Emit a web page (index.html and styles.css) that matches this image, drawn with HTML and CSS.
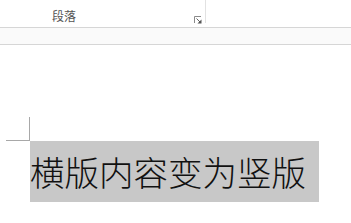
FILE: index.html
```html
<!DOCTYPE html>
<html lang="zh-CN">
<head>
  <meta charset="UTF-8">
  <meta name="viewport" content="width=device-width, initial-scale=1.0">
  <title>段落</title>
  <link rel="stylesheet" href="styles.css">
</head>
<body>
  <div class="ribbon">
    <div class="group">
      <span class="group-label">段落</span>
      <span class="launcher">
        <svg width="8" height="8" viewBox="0 0 8 8">
          <path d="M0.5 7V0.5H7" fill="none" stroke="#8a8a8a" stroke-width="1"/>
          <path d="M2.5 2.5L6 6" stroke="#666" stroke-width="1"/>
          <path d="M7.5 3.5V7.5H3.5Z" fill="#555"/>
        </svg>
      </span>
    </div>
  </div>

  <div class="ruler-bar"></div>

  <div class="page">
    <div class="corner-mark"></div>
    <div class="line">
      <span class="selected">横版内容变为竖版</span>
    </div>
  </div>
</body>
</html>
```

FILE: styles.css
```css
* {
  box-sizing: border-box;
  margin: 0;
  padding: 0;
}

body {
  background: #fff;
  font-family: "Noto Sans CJK SC", "Liberation Sans", sans-serif;
  color: #222;
  overflow: hidden;
}

.ribbon {
  height: 28px;
  border-bottom: 1px solid #d6d6d6;
}

.group {
  width: 206px;
  height: 23px;
  border-right: 1px solid #e2e2e2;
  display: flex;
  align-items: flex-end;
}

.group-label {
  margin-left: 52px;
  font-size: 12px;
  line-height: 14px;
  color: #555;
}

.launcher {
  margin-left: auto;
  margin-right: 3px;
  margin-bottom: -1px;
  display: flex;
  width: 8px;
  height: 8px;
}

.ruler-bar {
  height: 17px;
  background: #fafafa;
  border-bottom: 1px solid #d6d6d6;
}

.page {
  padding-top: 72px;
}

.corner-mark {
  width: 24px;
  height: 24px;
  margin-left: 6px;
  border-right: 1px solid #a8a8a8;
  border-bottom: 1px solid #a8a8a8;
}

.line {
  padding-left: 30px;
}

.selected {
  display: inline-block;
  width: 289px;
  height: 61px;
  line-height: 60px;
  background: #c8c8c8;
  font-size: 34.5px;
  font-weight: 300;
  color: #111;
}
```
